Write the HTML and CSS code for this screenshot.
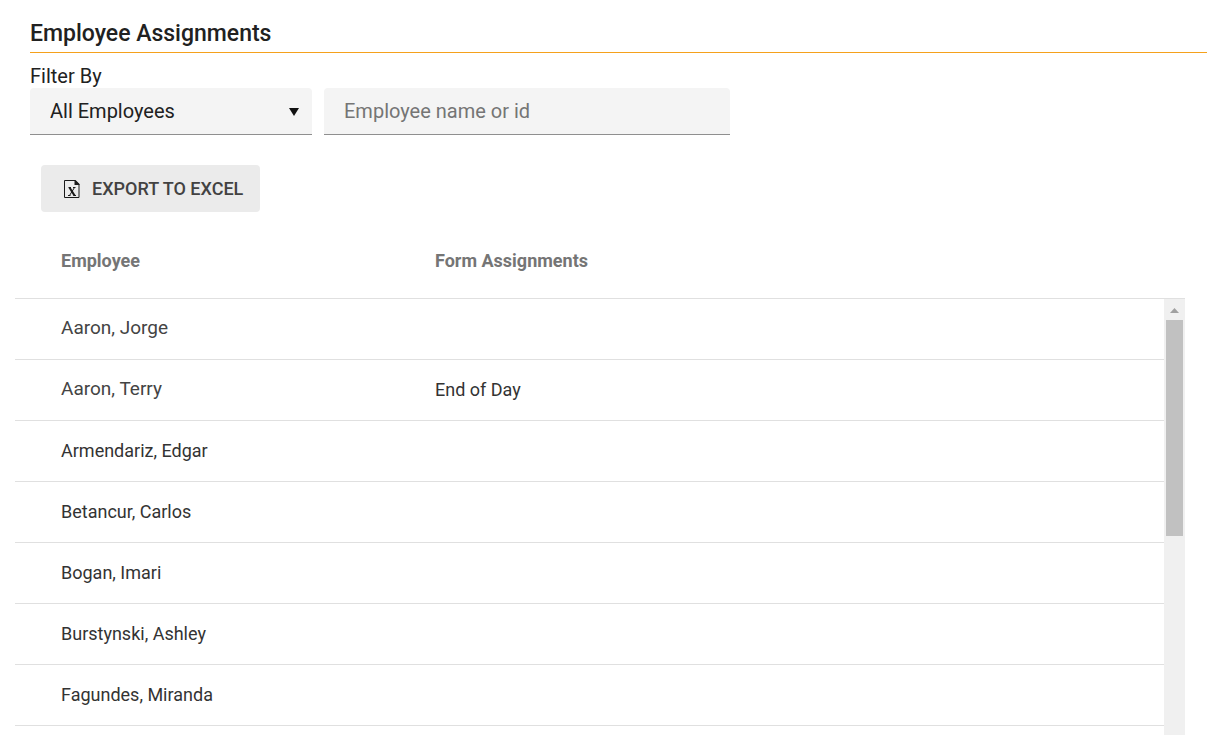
FILE: index.html
```html
<!DOCTYPE html>
<html lang="en">
<head>
<meta charset="utf-8">
<title>Employee Assignments</title>
<link rel="stylesheet" href="styles.css">
</head>
<body>
<main class="page">
  <header class="intro">
    <h1 class="title">Employee Assignments</h1>
    <form class="filter">
      <label class="filter-label" for="scope">Filter By</label>
      <div class="filter-fields">
        <div class="select-wrap">
          <select class="field select" id="scope"><option>All Employees</option></select>
          <svg class="caret" viewBox="0 0 10 8" aria-hidden="true"><path d="M0 0h10L5 8z"/></svg>
        </div>
        <input class="field search" type="text" aria-label="Employee name or id" placeholder="Employee name or id">
      </div>
    </form>
  </header>
  <button class="export" type="button">
    <svg class="excel" viewBox="0 0 16 18" aria-hidden="true">
      <path class="sheet" d="M.5.5h10.500l4 4v13H.5z"/>
      <path class="fold" d="M10.500 0h1L15.500 4v1h-5z"/>
      <path class="mark" d="m5.500 7.500 5 8"/>
      <path class="stroke" d="m10.500 7.500-5 8M4.500 7.500h2.500M9 7.500h2.500M4 15.500h2.500M9.500 15.500H12"/>
    </svg>
    <span>Export to Excel</span>
  </button>
  <section class="grid">
    <table class="table">
      <colgroup><col class="col-pad"><col class="col-name"><col class="col-form"><col></colgroup>
      <thead><tr><th></th><th scope="col">Employee</th><th scope="col">Form Assignments</th><th></th></tr></thead>
    </table>
    <div class="rows">
      <table class="table">
        <colgroup><col class="col-pad"><col class="col-name"><col class="col-form"><col></colgroup>
        <tbody>
          <tr><td></td><td class="loose">Aaron, Jorge</td><td></td><td></td></tr>
          <tr><td></td><td class="loose">Aaron, Terry</td><td>End of Day</td><td></td></tr>
          <tr><td></td><td>Armendariz, Edgar</td><td></td><td></td></tr>
          <tr><td></td><td>Betancur, Carlos</td><td></td><td></td></tr>
          <tr><td></td><td>Bogan, Imari</td><td></td><td></td></tr>
          <tr><td></td><td>Burstynski, Ashley</td><td></td><td></td></tr>
          <tr><td></td><td>Fagundes, Miranda</td><td></td><td></td></tr>
        </tbody>
      </table>
      <div class="scrollbar" aria-hidden="true">
        <svg class="scroll-up" viewBox="0 0 9 5"><path d="M0 5h9L4.500 0z"/></svg>
        <div class="thumb"></div>
      </div>
    </div>
  </section>
</main>
</body>
</html>
```

FILE: styles.css
```css
* { box-sizing: border-box; }
body { margin: 0; background: #fff; color: #212121; font-family: Roboto, sans-serif; }
.page { display: flex; flex-direction: column; align-items: flex-start; height: 100vh; overflow: hidden; }
.intro { align-self: stretch; padding: 18px 0 0 30px; }
.title { margin: 0; padding-bottom: 2px; border-bottom: 1px solid #f5a11c; font-size: 23px; line-height: 32px; font-weight: 500; }
.filter { padding-top: 11px; font-size: 20px; }
.filter-label { display: block; line-height: 24px; }
.filter-fields { display: flex; gap: 12px; }
.select-wrap { position: relative; width: 282px; }
.field { width: 100%; height: 47px; padding: 0 20px; border: 0; border-bottom: 1px solid #8f8f8f; border-radius: 4px 4px 0 0; background: #f4f4f4; color: #212121; font: 20px Roboto, sans-serif; }
.select { appearance: none; }
.caret { position: absolute; top: 20px; right: 13px; width: 10px; height: 8px; fill: #111; pointer-events: none; }
.search { width: 406px; }
.search::placeholder { color: #757575; opacity: 1; }
.export { display: flex; align-items: center; gap: 12px; height: 47px; margin: 30px 0 0 41px; padding: 0 17px 0 23px; border: 0; border-radius: 4px; background: #ebebeb; color: #424242; font: 500 18px Roboto, sans-serif; text-transform: uppercase; }
.excel { width: 16px; height: 18px; fill: none; stroke: #1a1a1a; }
.sheet { stroke-width: 1; }
.fold { fill: #1a1a1a; stroke: none; }
.mark { stroke-width: 2; }
.stroke { stroke-width: 1; }
.grid { display: flex; flex: 1; flex-direction: column; align-self: stretch; min-height: 0; margin: 12px 22px 0 15px; }
.table { width: 100%; border-collapse: separate; border-spacing: 0; table-layout: fixed; }
.col-pad { width: 16px; }
.col-name { width: 374px; }
.col-form { width: 251px; }
th, td { padding: 0 0 0 30px; border-bottom: 1px solid #e0e0e0; text-align: left; white-space: nowrap; }
th:first-child, td:first-child { padding: 0; }
th { height: 75px; padding-bottom: 2px; color: #757575; font-size: 18px; font-weight: 700; }
td { height: 61px; padding-bottom: 2px; font-size: 18px; color: #333; }
.loose { padding-bottom: 4px; font-size: 19px; color: #444; }
.rows { display: flex; flex: 1; align-items: flex-start; min-height: 0; overflow: hidden; }
.rows .table { flex: 1; }
.scrollbar { display: flex; flex-direction: column; align-items: center; align-self: stretch; width: 21px; background: #f0f0f0; }
.scroll-up { width: 9px; height: 5px; margin: 9px 0 7px; fill: #a0a0a0; }
.thumb { width: 17px; height: 216px; background: #c1c1c1; }
```
